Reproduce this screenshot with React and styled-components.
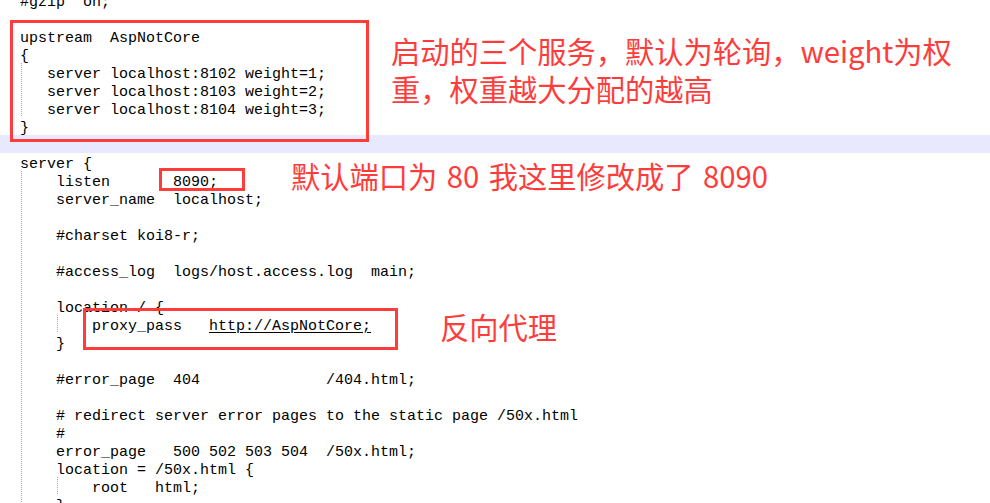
import React from "react";
import styled, { createGlobalStyle } from "styled-components";

const GlobalStyle = createGlobalStyle`
  html, body { margin: 0; padding: 0; background: #ffffff; overflow: hidden; }
`;

const CH = 9;

const Canvas = styled.div`
  position: relative;
  width: 990px;
  height: 503px;
  overflow: hidden;
  background: #ffffff;
`;

const Editor = styled.div`
  display: flex;
  flex-direction: column;
  margin-top: -9px;
  font-family: "Liberation Mono", "Courier New", monospace;
  font-size: 15px;
  color: #000000;
`;

const Line = styled.div`
  display: flex;
  align-items: flex-start;
  height: 18px;
  padding-left: 20px;
  white-space: pre;
  background: ${(p) => (p.$active ? "#e8e8ff" : "transparent")};
`;

const Indent = styled.span`
  display: inline-block;
  flex: none;
  width: ${(p) => p.$cols * CH}px;
  height: 18px;
  background: repeating-linear-gradient(
      to bottom,
      #a8a8a8 0 1px,
      transparent 1px 2px
    )
    no-repeat 1px 0 / 1px 100%;
`;

const Code = styled.span`
  white-space: pre;
  line-height: 23px;
`;

const Link = styled(Code)`
  text-decoration: underline;
  text-underline-offset: 2px;
`;

const Box = styled.div`
  position: absolute;
  left: ${(p) => p.$x}px;
  top: ${(p) => p.$y}px;
  width: ${(p) => p.$w}px;
  height: ${(p) => p.$h}px;
  box-sizing: border-box;
  border: 3px solid #ff3c3c;
  pointer-events: none;
`;

const Note = styled.div`
  position: absolute;
  left: ${(p) => p.$x}px;
  top: ${(p) => p.$y}px;
  font-family: "Noto Sans CJK SC", "Noto Sans", sans-serif;
  font-size: 29.25px;
  line-height: 38px;
  word-spacing: ${(p) => p.$ws || 0}px;
  color: #ff3c3c;
  white-space: nowrap;
`;

const lines = [
  { g: [], t: "#gzip  on;" },
  { g: [], t: "" },
  { g: [], t: "upstream  AspNotCore" },
  { g: [], t: "{" },
  { g: [3], t: "server localhost:8102 weight=1;" },
  { g: [3], t: "server localhost:8103 weight=2;" },
  { g: [3], t: "server localhost:8104 weight=3;" },
  { g: [], t: "}" },
  { g: [], t: "", active: true },
  { g: [], t: "server {" },
  { g: [4], t: "listen       8090;" },
  { g: [4], t: "server_name  localhost;" },
  { g: [4], t: "" },
  { g: [4], t: "#charset koi8-r;" },
  { g: [4], t: "" },
  { g: [4], t: "#access_log  logs/host.access.log  main;" },
  { g: [4], t: "" },
  { g: [4], t: "location / {" },
  { g: [4, 4], t: "proxy_pass   ", link: "http://AspNotCore;" },
  { g: [4], t: "}" },
  { g: [4], t: "" },
  { g: [4], t: "#error_page  404              /404.html;" },
  { g: [4], t: "" },
  { g: [4], t: "# redirect server error pages to the static page /50x.html" },
  { g: [4], t: "#" },
  { g: [4], t: "error_page   500 502 503 504  /50x.html;" },
  { g: [4], t: "location = /50x.html {" },
  { g: [4, 4], t: "root   html;" },
  { g: [4], t: "}" },
];

export default function App() {
  return (
    <>
      <GlobalStyle />
      <Canvas>
        <Editor>
          {lines.map((l, i) => (
            <Line key={i} $active={l.active}>
              {l.g.map((c, j) => (
                <Indent key={j} $cols={c} />
              ))}
              <Code>{l.t}</Code>
              {l.link && <Link>{l.link}</Link>}
            </Line>
          ))}
        </Editor>

        <Box $x={10} $y={20} $w={359} $h={122} />
        <Box $x={159} $y={168} $w={86} $h={23} />
        <Box $x={83} $y={308} $w={315} $h={42} />

        <Note $x={391} $y={31}>
          启动的三个服务，默认为轮询，weight为权
          <br />
          重，权重越大分配的越高
        </Note>
        <Note $x={291} $y={156} $ws={3}>默认端口为 80 我这里修改成了 8090</Note>
        <Note $x={440} $y={307}>反向代理</Note>
      </Canvas>
    </>
  );
}
